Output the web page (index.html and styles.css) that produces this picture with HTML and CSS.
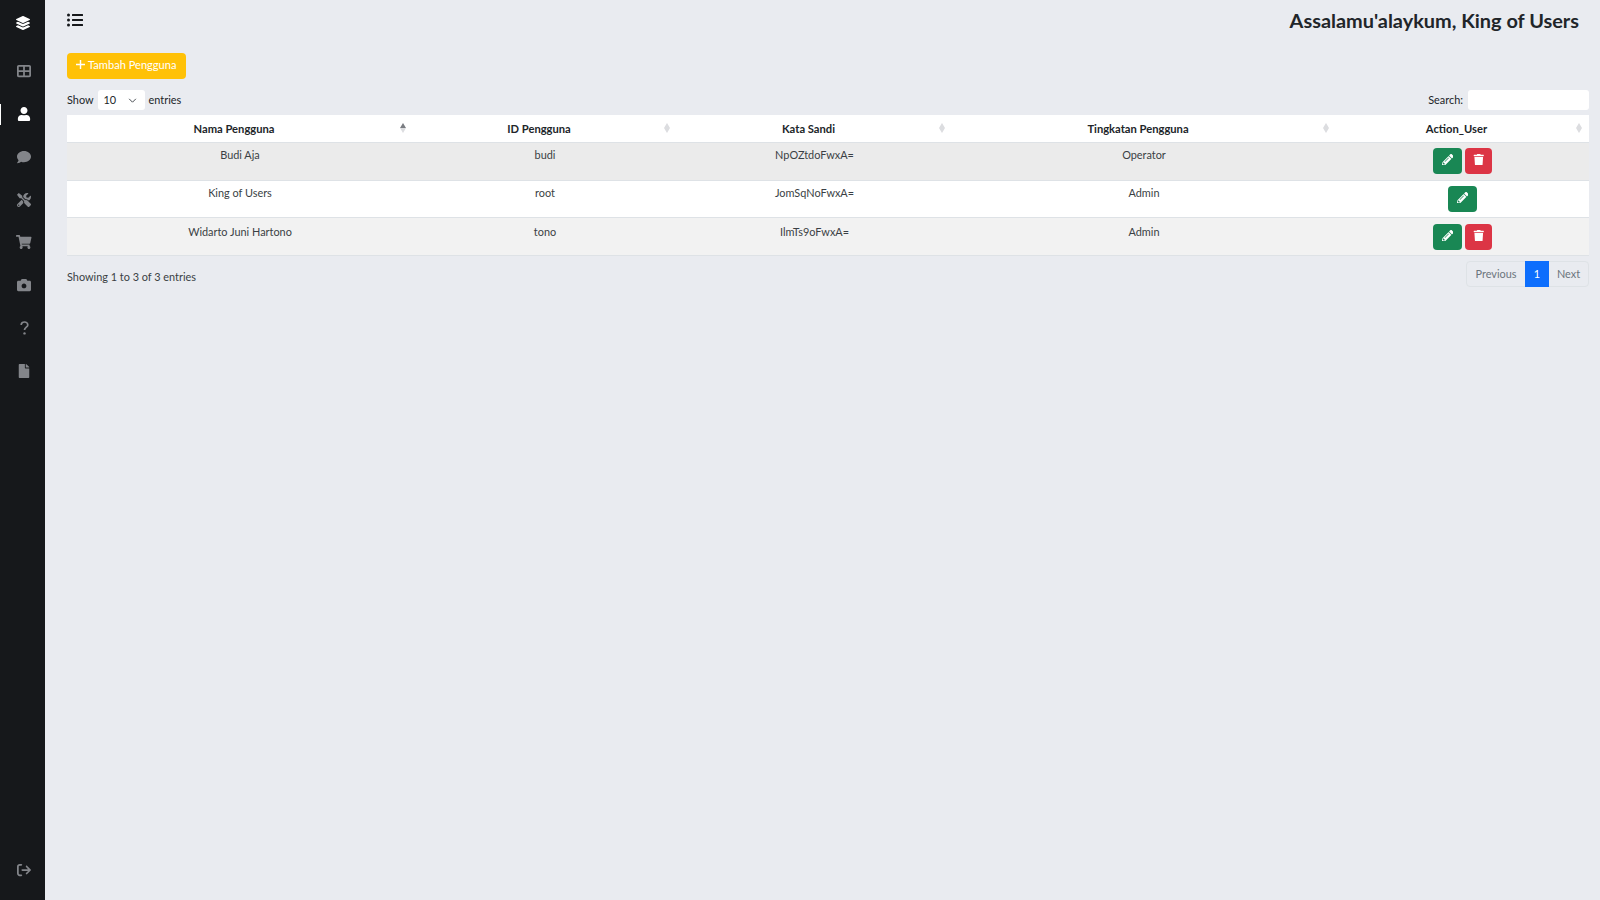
FILE: index.html
```html
<!DOCTYPE html>
<html lang="id">
<head>
<meta charset="utf-8">
<title>Pengguna</title>
<link rel="stylesheet" href="styles.css">
</head>
<body>
<div class="app">
  <aside class="sidebar">
    <a class="side-logo"><svg class="ic-logo" viewBox="0 0 512 512"><path d="M12.41 148.02l232.94 105.67c6.8 3.09 14.49 3.09 21.29 0l232.94-105.67c16.55-7.51 16.55-32.52 0-40.03L266.65 2.31a25.607 25.607 0 0 0-21.29 0L12.41 107.98c-16.55 7.51-16.55 32.53 0 40.04zm487.18 88.28l-58.09-26.33-161.64 73.27c-7.56 3.43-15.59 5.17-23.86 5.17s-16.29-1.74-23.86-5.17L70.51 209.97l-58.1 26.33c-16.55 7.5-16.55 32.5 0 40l232.94 105.59c6.8 3.08 14.49 3.08 21.29 0L499.59 276.3c16.55-7.5 16.55-32.5 0-40zm0 127.8l-57.87-26.23-161.86 73.37c-7.56 3.43-15.59 5.17-23.86 5.17s-16.29-1.74-23.86-5.17L70.29 337.87 12.41 364.1c-16.55 7.5-16.55 32.5 0 40l232.94 105.59c6.8 3.08 14.49 3.08 21.29 0L499.59 404.1c16.55-7.5 16.55-32.5 0-40z"/></svg></a>
    <nav class="side-nav">
      <a class="side-link"><svg class="ic" viewBox="0 0 512 512"><path d="M448 96V224H288V96H448zm0 192V416H288V288H448zM224 224H64V96H224V224zM64 288H224V416H64V288zM64 32C28.7 32 0 60.7 0 96V416c0 35.3 28.7 64 64 64H448c35.3 0 64-28.7 64-64V96c0-35.3-28.7-64-64-64H64z"/></svg></a>
      <a class="side-link active"><svg class="ic" viewBox="0 0 448 512"><path d="M224 256c70.7 0 128-57.3 128-128S294.7 0 224 0 96 57.3 96 128s57.3 128 128 128zm89.6 32h-16.7c-22.2 10.2-46.9 16-72.9 16s-50.6-5.8-72.9-16h-16.7C60.2 288 0 348.2 0 422.4V464c0 26.5 21.5 48 48 48h352c26.5 0 48-21.5 48-48v-41.6c0-74.2-60.2-134.4-134.4-134.4z"/></svg></a>
      <a class="side-link"><svg class="ic" viewBox="0 0 512 512"><path d="M256 32C114.6 32 0 125.1 0 240c0 49.6 21.4 95 57 130.7C44.5 421.1 2.7 466 2.2 466.5c-2.2 2.3-2.8 5.7-1.5 8.7S4.8 480 8 480c66.3 0 116-31.8 140.6-51.4 32.7 12.3 69 19.4 107.4 19.4 141.4 0 256-93.1 256-208S397.4 32 256 32z"/></svg></a>
      <a class="side-link"><svg class="ic" viewBox="0 0 512 512"><path d="M501.1 395.7L384 278.6c-23.1-23.1-57.6-27.6-85.4-13.9L192 158.1V96L64 0 0 64l96 128h62.1l106.6 106.6c-13.6 27.8-9.2 62.3 13.9 85.4l117.1 117.1c14.6 14.6 38.2 14.6 52.7 0l52.7-52.7c14.5-14.6 14.5-38.2 0-52.7zM331.7 225c28.3 0 54.9 11 74.9 31l19.4 19.4c15.8-6.9 30.8-16.5 43.8-29.5 37.1-37.1 49.7-89.3 37.9-136.7-2.2-9-13.5-12.1-20.1-5.5l-74.4 74.4-67.9-11.3L334 98.9l74.4-74.4c6.6-6.6 3.4-17.9-5.7-20.2-47.4-11.7-99.6.9-136.6 37.9-28.5 28.5-41.9 66.1-41.2 103.6l82.1 82.1c8.1-1.9 16.5-2.9 24.7-2.9zm-103.9 82l-56.7-56.7L18.7 402.8c-25 25-25 65.5 0 90.5s65.5 25 90.5 0l123.6-123.6c-7.6-19.9-9.9-41.6-5-62.7zM64 472c-13.2 0-24-10.8-24-24 0-13.3 10.7-24 24-24s24 10.7 24 24c0 13.2-10.7 24-24 24z"/></svg></a>
      <a class="side-link"><svg class="ic ic-cart" viewBox="0 0 576 512"><path d="M528.12 301.319l47.273-208C578.806 78.301 567.391 64 551.99 64H159.208l-9.166-44.81C147.758 8.021 137.93 0 126.529 0H24C10.745 0 0 10.745 0 24v16c0 13.255 10.745 24 24 24h69.883l70.248 343.435C147.325 417.1 136 435.222 136 456c0 30.928 25.072 56 56 56s56-25.072 56-56c0-15.674-6.447-29.835-16.824-40h209.647C430.447 426.165 424 440.326 424 456c0 30.928 25.072 56 56 56s56-25.072 56-56c0-22.172-12.888-41.332-31.579-50.405l5.517-24.276c3.413-15.018-8.002-29.319-23.403-29.319H218.117l-6.545-32h293.145c11.206 0 20.92-7.754 23.403-18.681z"/></svg></a>
      <a class="side-link"><svg class="ic" viewBox="0 0 512 512"><path fill-rule="evenodd" d="M512 144v288c0 26.5-21.5 48-48 48H48c-26.5 0-48-21.5-48-48V144c0-26.5 21.5-48 48-48h88l12.3-32.9c7-18.7 24.9-31.1 44.9-31.1h125.5c20 0 37.9 12.4 44.9 31.1L376 96h88c26.5 0 48 21.5 48 48zM344 288c0-48.5-39.5-88-88-88s-88 39.5-88 88 39.5 88 88 88 88-39.5 88-88z"/></svg></a>
      <a class="side-link"><svg class="ic-q" viewBox="0 0 9 14"><path class="q-stroke" d="M1.2 4C1.2 2 2.6 1 4.5 1S7.8 2.2 7.8 3.9C7.8 6 4.5 6.3 4.5 9"/><circle class="q-dot" cx="4.5" cy="12.4" r="1.2"/></svg></a>
      <a class="side-link"><svg class="ic" viewBox="0 0 384 512"><path d="M224 136V0H24C10.7 0 0 10.7 0 24v464c0 13.3 10.7 24 24 24h336c13.3 0 24-10.7 24-24V160H248c-13.2 0-24-10.8-24-24zm160-14.1v6.1H256V0h6.1c6.4 0 12.5 2.5 17 7l97.9 98c4.5 4.5 7 10.6 7 16.9z"/></svg></a>
    </nav>
    <a class="side-link side-logout"><svg class="ic" viewBox="0 0 512 512"><path d="M502.6 278.6c12.5-12.5 12.5-32.8 0-45.3l-128-128c-12.5-12.5-32.8-12.5-45.3 0s-12.5 32.8 0 45.3L402.7 224 192 224c-17.7 0-32 14.3-32 32s14.3 32 32 32l210.7 0-73.4 73.4c-12.5 12.5-12.5 32.8 0 45.3s32.8 12.5 45.3 0l128-128zM160 96c17.7 0 32-14.3 32-32s-14.3-32-32-32L96 32C43 32 0 75 0 128L0 384c0 53 43 96 96 96l64 0c17.7 0 32-14.3 32-32s-14.3-32-32-32l-64 0c-17.7 0-32-14.3-32-32l0-256c0-17.7 14.3-32 32-32l64 0z"/></svg></a>
  </aside>
  <main class="main">
    <header class="topbar">
      <svg class="ic-menu" viewBox="0 0 512 512"><path d="M48 48a48 48 0 1 0 48 48 48 48 0 0 0-48-48zm0 160a48 48 0 1 0 48 48 48 48 0 0 0-48-48zm0 160a48 48 0 1 0 48 48 48 48 0 0 0-48-48zm448 16H176a16 16 0 0 0-16 16v32a16 16 0 0 0 16 16h320a16 16 0 0 0 16-16v-32a16 16 0 0 0-16-16zm0-320H176a16 16 0 0 0-16 16v32a16 16 0 0 0 16 16h320a16 16 0 0 0 16-16V80a16 16 0 0 0-16-16zm0 160H176a16 16 0 0 0-16 16v32a16 16 0 0 0 16 16h320a16 16 0 0 0 16-16v-32a16 16 0 0 0-16-16z"/></svg>
      <h1 class="greeting">Assalamu'alaykum, King of Users</h1>
    </header>
    <button class="btn-add" type="button"><svg class="ic-plus" viewBox="0 0 12 12"><path d="M6 0v12M0 6h12"/></svg><span class="btn-label">Tambah Pengguna</span></button>
    <div class="dt-top">
      <label class="dt-length"><span class="lift">Show</span> <span class="select-box"><span class="lift">10</span><svg class="ic-chev" viewBox="0 0 16 16"><path d="M2 5l6 6 6-6"/></svg></span> <span class="lift">entries</span></label>
      <label class="dt-search"><span class="lift">Search:</span> <input class="search-input" type="search"></label>
    </div>
    <table class="users">
      <colgroup><col class="c1"><col class="c2"><col class="c3"><col class="c4"><col class="c5"></colgroup>
      <thead>
        <tr>
          <th>Nama Pengguna<span class="sort asc"></span></th>
          <th>ID Pengguna<span class="sort"></span></th>
          <th>Kata Sandi<span class="sort"></span></th>
          <th>Tingkatan Pengguna<span class="sort"></span></th>
          <th>Action_User<span class="sort"></span></th>
        </tr>
      </thead>
      <tbody>
        <tr class="row-hover">
          <td>Budi Aja</td><td>budi</td><td>NpOZtdoFwxA=</td><td>Operator</td>
          <td class="actions"><button class="btn-act edit" type="button"><svg viewBox="0 0 512 512"><path d="M497.9 142.1l-46.1 46.1c-4.7 4.7-12.3 4.7-17 0l-111-111c-4.7-4.7-4.7-12.3 0-17l46.1-46.1c18.7-18.7 49.1-18.7 67.9 0l60.1 60.1c18.8 18.7 18.8 49.1 0 67.9zM284.2 99.8L21.6 362.4.4 483.9c-2.9 16.4 11.4 30.6 27.8 27.8l121.5-21.3 262.6-262.6c4.7-4.7 4.7-12.3 0-17l-111-111c-4.8-4.7-12.4-4.7-17.1 0zM124.1 339.9c-5.5-5.5-5.5-14.3 0-19.8l154-154c5.5-5.5 14.3-5.5 19.8 0s5.5 14.3 0 19.8l-154 154c-5.5 5.5-14.3 5.5-19.8 0zM88 424h48v36.3l-64.5 11.3-31.1-31.1L51.7 376H88v48z"/></svg></button><button class="btn-act del" type="button"><svg viewBox="0 0 448 512"><path d="M432 32H312l-9.4-18.7A24 24 0 0 0 281.1 0H166.8a23.72 23.72 0 0 0-21.4 13.3L136 32H16A16 16 0 0 0 0 48v32a16 16 0 0 0 16 16h416a16 16 0 0 0 16-16V48a16 16 0 0 0-16-16zM53.2 467a48 48 0 0 0 47.9 45h245.8a48 48 0 0 0 47.9-45L416 128H32z"/></svg></button></td>
        </tr>
        <tr class="row-plain">
          <td>King of Users</td><td>root</td><td>JomSqNoFwxA=</td><td>Admin</td>
          <td class="actions"><button class="btn-act edit" type="button"><svg viewBox="0 0 512 512"><path d="M497.9 142.1l-46.1 46.1c-4.7 4.7-12.3 4.7-17 0l-111-111c-4.7-4.7-4.7-12.3 0-17l46.1-46.1c18.7-18.7 49.1-18.7 67.9 0l60.1 60.1c18.8 18.7 18.8 49.1 0 67.9zM284.2 99.8L21.6 362.4.4 483.9c-2.9 16.4 11.4 30.6 27.8 27.8l121.5-21.3 262.6-262.6c4.7-4.7 4.7-12.3 0-17l-111-111c-4.8-4.7-12.4-4.7-17.1 0zM124.1 339.9c-5.5-5.5-5.5-14.3 0-19.8l154-154c5.5-5.5 14.3-5.5 19.8 0s5.5 14.3 0 19.8l-154 154c-5.5 5.5-14.3 5.5-19.8 0zM88 424h48v36.3l-64.5 11.3-31.1-31.1L51.7 376H88v48z"/></svg></button></td>
        </tr>
        <tr class="row-odd">
          <td>Widarto Juni Hartono</td><td>tono</td><td>IlmTs9oFwxA=</td><td>Admin</td>
          <td class="actions"><button class="btn-act edit" type="button"><svg viewBox="0 0 512 512"><path d="M497.9 142.1l-46.1 46.1c-4.7 4.7-12.3 4.7-17 0l-111-111c-4.7-4.7-4.7-12.3 0-17l46.1-46.1c18.7-18.7 49.1-18.7 67.9 0l60.1 60.1c18.8 18.7 18.8 49.1 0 67.9zM284.2 99.8L21.6 362.4.4 483.9c-2.9 16.4 11.4 30.6 27.8 27.8l121.5-21.3 262.6-262.6c4.7-4.7 4.7-12.3 0-17l-111-111c-4.8-4.7-12.4-4.7-17.1 0zM124.1 339.9c-5.5-5.5-5.5-14.3 0-19.8l154-154c5.5-5.5 14.3-5.5 19.8 0s5.5 14.3 0 19.8l-154 154c-5.5 5.5-14.3 5.5-19.8 0zM88 424h48v36.3l-64.5 11.3-31.1-31.1L51.7 376H88v48z"/></svg></button><button class="btn-act del" type="button"><svg viewBox="0 0 448 512"><path d="M432 32H312l-9.4-18.7A24 24 0 0 0 281.1 0H166.8a23.72 23.72 0 0 0-21.4 13.3L136 32H16A16 16 0 0 0 0 48v32a16 16 0 0 0 16 16h416a16 16 0 0 0 16-16V48a16 16 0 0 0-16-16zM53.2 467a48 48 0 0 0 47.9 45h245.8a48 48 0 0 0 47.9-45L416 128H32z"/></svg></button></td>
        </tr>
      </tbody>
    </table>
    <div class="dt-bottom">
      <div class="dt-info">Showing 1 to 3 of 3 entries</div>
      <div class="pager"><a class="page prev">Previous</a><a class="page current">1</a><a class="page next">Next</a></div>
    </div>
  </main>
</div>
</body>
</html>
```
FILE: styles.css
```css
* { box-sizing: border-box; }
html, body { margin: 0; height: 100%; }
body {
  font-family: "Lato", "Open Sans", "Liberation Sans", sans-serif;
  font-size: 10.9px;
  color: #212529;
  background: #e9ebf0;
  overflow: hidden;
}
.app { display: flex; height: 900px; }

.sidebar {
  width: 45px;
  flex: none;
  background: #16181b;
  display: flex;
  flex-direction: column;
}
.side-logo {
  height: 50px;
  padding: 0 0 5px 1px;
  display: flex;
  align-items: center;
  justify-content: center;
}
.ic-logo { width: 14px; height: 14px; fill: #fff; }
.side-nav { display: flex; flex-direction: column; }
.side-link {
  height: 42.75px;
  padding-left: 3px;
  display: flex;
  align-items: center;
  justify-content: center;
  position: relative;
}
.ic { width: 14px; height: 14px; fill: #83858a; }
.ic-cart { width: 15.5px; height: 14px; }
.ic-q { width: 9px; height: 14px; }
.q-stroke { fill: none; stroke: #83858a; stroke-width: 1.7; }
.q-dot { fill: #83858a; }
.side-link.active .ic { fill: #fff; }
.side-link.active::before {
  content: "";
  position: absolute;
  left: 0;
  top: 11px;
  width: 1px;
  height: 21px;
  background: #fff;
}
.side-logout { margin-top: auto; margin-bottom: 9px; }

.main { flex: 1; min-width: 0; padding: 0 11px 0 22px; }
.topbar {
  height: 53px;
  display: flex;
  justify-content: space-between;
  align-items: flex-start;
}
.ic-menu { width: 16px; height: 16px; margin-top: 12px; fill: #16181b; }
.greeting {
  margin: 8px 0 0;
  font-size: 19.9px;
  line-height: 24px;
  font-weight: 700;
  color: #212529;
  padding-right: 10px;
}
.btn-add {
  display: flex;
  align-items: center;
  gap: 3px;
  width: 119px;
  height: 26px;
  padding: 0 0 3px 9px;
  border: 0;
  border-radius: 4px;
  background: #ffc107;
  color: #fff;
  font: inherit;
  font-size: 11.1px;
  white-space: nowrap;
}
.ic-plus { width: 9px; height: 9px; flex: none; fill: none; stroke: #fff; stroke-width: 1.9; }
.dt-top {
  display: flex;
  justify-content: space-between;
  align-items: center;
  height: 20px;
  margin-top: 11px;
  margin-bottom: 5px;
}
.lift { position: relative; top: -1px; }
.dt-length { display: flex; align-items: center; gap: 4px; }
.select-box {
  width: 47px;
  height: 20px;
  background: #fff;
  border-radius: 3px;
  padding: 0 8px 0 6px;
  display: flex;
  align-items: center;
  justify-content: space-between;
}
.ic-chev { width: 9px; height: 9px; fill: none; stroke: #343a40; stroke-width: 1.6; }
.dt-search { display: flex; align-items: center; gap: 5px; }
.search-input {
  width: 121px;
  height: 20px;
  border: 0;
  border-radius: 3px;
  background: #fff;
  padding: 0 6px;
}
.users {
  width: 1522px;
  border-collapse: collapse;
  table-layout: fixed;
}
.c1 { width: 346px; }
.c2 { width: 264px; }
.c3 { width: 275px; }
.c4 { width: 384px; }
.c5 { width: 253px; }
.users th {
  position: relative;
  height: 27px;
  padding: 0 14px 0 2px;
  background: #fff;
  font-size: 11.2px;
  font-weight: 700;
  text-align: center;
  border-bottom: 1px solid #dee2e6;
}
.users td {
  height: 38px;
  padding: 4.5px 8px 0;
  text-align: center;
  vertical-align: top;
  border-bottom: 1px solid #dee2e6;
  color: #3a3f44;
  line-height: 16px;
}
.row-hover td { background: #ebebeb; }
.row-plain td { background: #fff; height: 37px; padding-top: 4px; }
.row-odd td { background: #f2f2f2; padding-top: 6px; }
.users td.actions { padding: 5px 0 0; }
.users .row-odd td.actions { padding-top: 6px; }
.btn-act {
  display: inline-flex;
  align-items: center;
  justify-content: center;
  height: 26px;
  padding: 0 0 2px;
  border: 0;
  border-radius: 4px;
  vertical-align: top;
}
.btn-act svg { width: 11.5px; height: 11.5px; fill: #fff; }
.edit { width: 29px; background: #198754; }
.del { width: 27px; margin-left: 3px; background: #dc3545; }
.sort {
  position: absolute;
  right: 7.5px;
  top: 8px;
  width: 6px;
  height: 11px;
  display: flex;
  flex-direction: column;
  align-items: center;
}
.sort::before, .sort::after {
  content: "";
  border-left: 3px solid transparent;
  border-right: 3px solid transparent;
}
.sort::before { border-bottom: 5.5px solid #dcdde0; }
.sort::after { border-top: 5.5px solid #dcdde0; }
.sort.asc::before { border-bottom-color: #7a7d82; }
.dt-bottom {
  display: flex;
  justify-content: space-between;
  align-items: flex-start;
  margin-top: 5px;
}
.dt-info { margin-top: 9px; color: #3a3f44; }
.pager {
  display: flex;
  height: 26px;
  border: 1px solid #dee2e6;
  border-radius: 4px;
}
.page {
  display: flex;
  align-items: center;
  justify-content: center;
  color: #6c757d;
}
.prev { width: 58px; }
.current { width: 24px; margin: -1px 0; background: #0d6efd; color: #fff; }
.next { width: 39px; }
```
